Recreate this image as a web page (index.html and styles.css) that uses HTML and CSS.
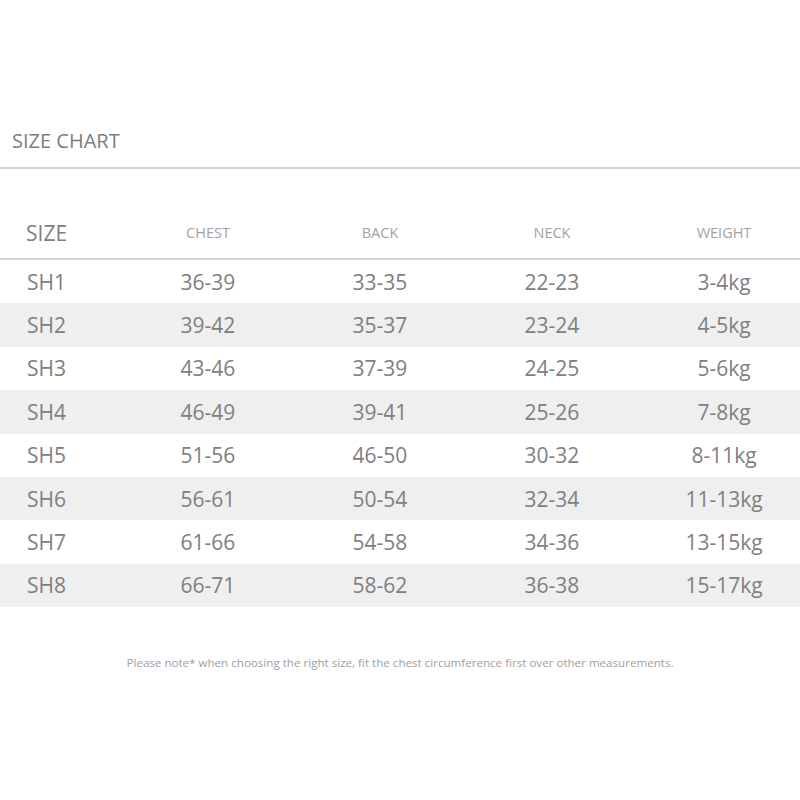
FILE: index.html
```html
<!DOCTYPE html>
<html>
<head>
<meta charset="utf-8">
<link rel="stylesheet" href="styles.css">
</head>
<body>
<div class="page">
  <div class="title-bar"><h1 class="title">SIZE CHART</h1></div>
  <div class="chart">
    <div class="row head">
      <div class="c first big">SIZE</div>
      <div class="c">CHEST</div>
      <div class="c">BACK</div>
      <div class="c">NECK</div>
      <div class="c">WEIGHT</div>
    </div>
    <div class="row"><div class="c first">SH1</div><div class="c">36-39</div><div class="c">33-35</div><div class="c">22-23</div><div class="c">3-4kg</div></div>
    <div class="row alt"><div class="c first">SH2</div><div class="c">39-42</div><div class="c">35-37</div><div class="c">23-24</div><div class="c">4-5kg</div></div>
    <div class="row"><div class="c first">SH3</div><div class="c">43-46</div><div class="c">37-39</div><div class="c">24-25</div><div class="c">5-6kg</div></div>
    <div class="row alt"><div class="c first">SH4</div><div class="c">46-49</div><div class="c">39-41</div><div class="c">25-26</div><div class="c">7-8kg</div></div>
    <div class="row"><div class="c first">SH5</div><div class="c">51-56</div><div class="c">46-50</div><div class="c">30-32</div><div class="c">8-11kg</div></div>
    <div class="row alt"><div class="c first">SH6</div><div class="c">56-61</div><div class="c">50-54</div><div class="c">32-34</div><div class="c">11-13kg</div></div>
    <div class="row"><div class="c first">SH7</div><div class="c">61-66</div><div class="c">54-58</div><div class="c">34-36</div><div class="c">13-15kg</div></div>
    <div class="row alt"><div class="c first">SH8</div><div class="c">66-71</div><div class="c">58-62</div><div class="c">36-38</div><div class="c">15-17kg</div></div>
  </div>
  <p class="note">Please note* when choosing the right size, fit the chest circumference first over other measurements.</p>
</div>
</body>
</html>
```
FILE: styles.css
```css
html, body {
  margin: 0;
  padding: 0;
  background: #ffffff;
}
.page {
  width: 800px;
  font-family: "Open Sans", "Noto Sans", sans-serif;
  color: #808080;
}
.title-bar {
  padding: 127px 0 12px 12px;
  border-bottom: 2px solid #d2d2d2;
}
.title {
  margin: 0;
  font-size: 20px;
  line-height: 28px;
  font-weight: 400;
  color: #7c7c7c;
}
.chart {
  margin-top: 39px;
}
.row {
  display: grid;
  grid-template-columns: 111px repeat(4, 150px);
  column-gap: 22px;
  align-items: center;
  height: 43.4px;
  font-size: 21px;
  line-height: 28px;
}
.row.alt {
  background: #efefef;
}
.row.head {
  height: 50px;
  border-bottom: 2px solid #d2d2d2;
  font-size: 14.5px;
  color: #a2a2a2;
}
.c {
  text-align: center;
}
.c.first {
  text-align: left;
  padding-left: 27px;
}
.c.big {
  font-size: 21px;
  color: #808080;
  padding-left: 26px;
}
.note {
  margin: 48px 0 0;
  text-align: center;
  font-size: 11.6px;
  line-height: 16px;
  color: #a0a0a0;
}
```
